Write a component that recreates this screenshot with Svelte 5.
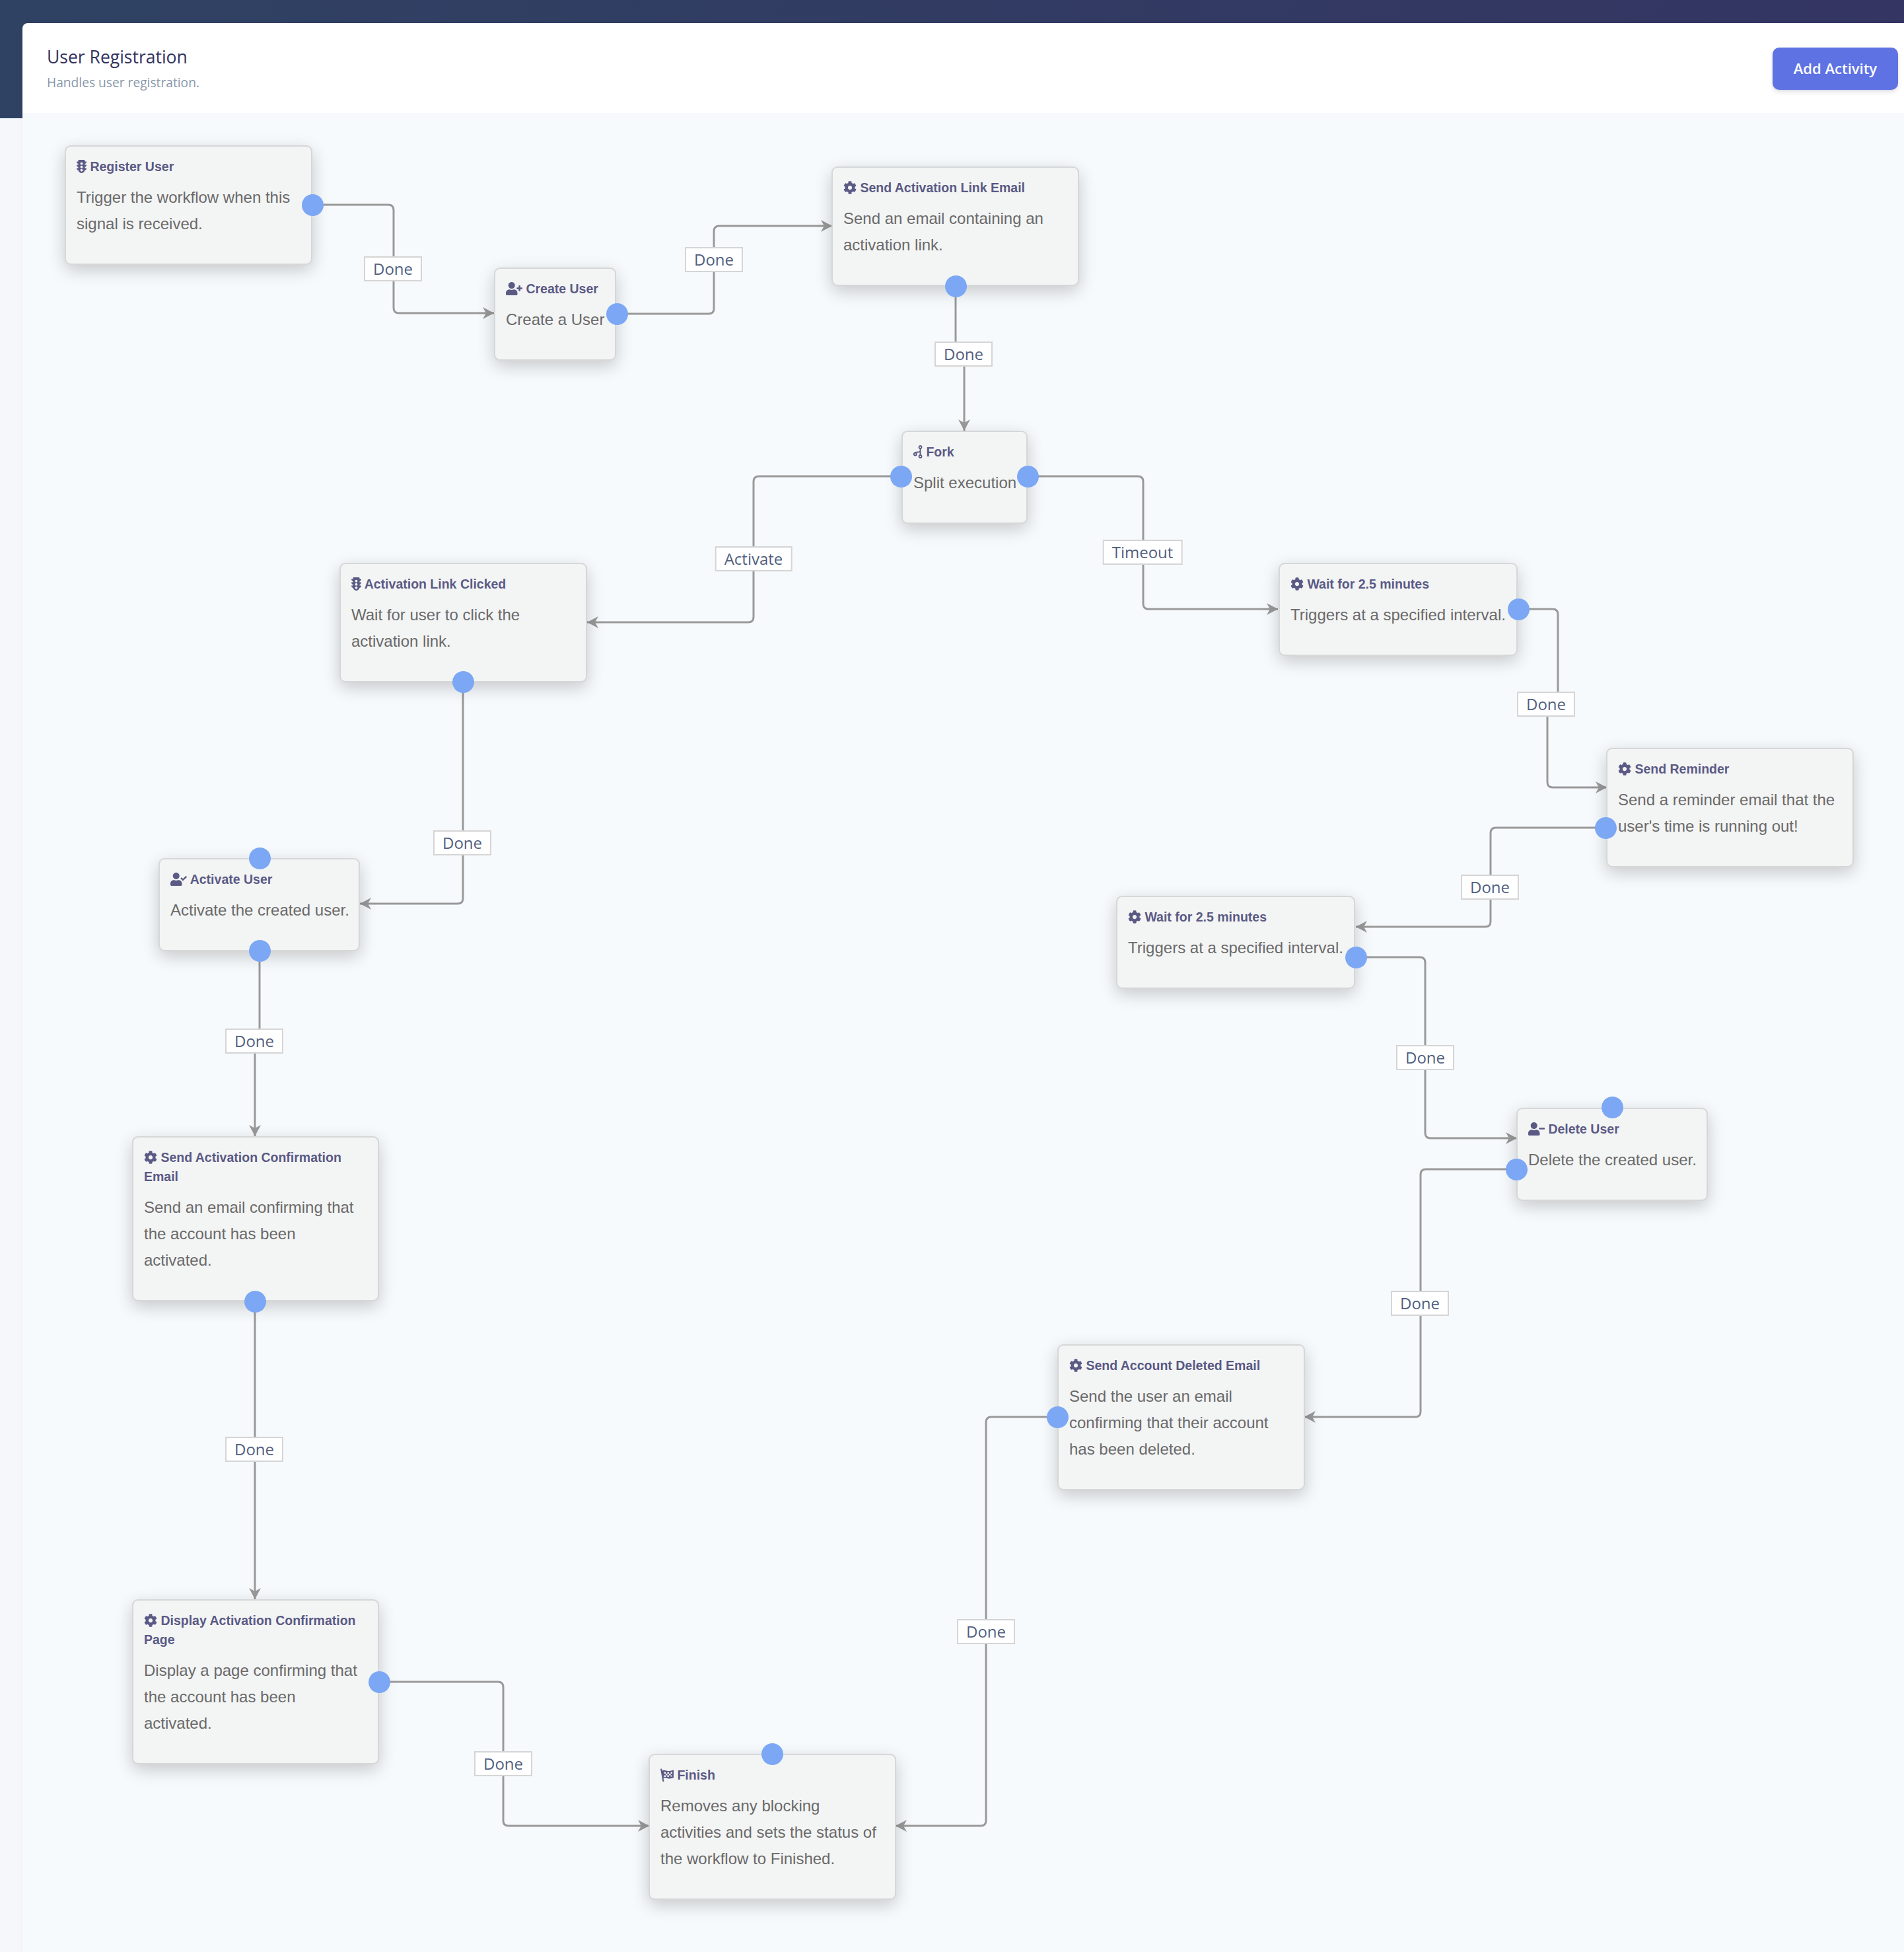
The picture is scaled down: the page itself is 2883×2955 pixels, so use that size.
<script>
  // page coordinates of the workflow, the canvas starts at ox/oy
  const ox = 34;
  const oy = 171;

  const user = "M224 256c70.7 0 128-57.3 128-128S294.7 0 224 0 96 57.3 96 128s57.3 128 128 128zm89.6 32h-16.7c-22.2 10.2-46.9 16-72.9 16s-50.6-5.8-72.9-16h-16.7C60.2 288 0 348.2 0 422.4V464c0 26.5 21.5 48 48 48h352c26.5 0 48-21.5 48-48v-41.6c0-74.2-60.2-134.4-134.4-134.4z";
  const icons = {
    signal: { box: "0 0 384 512", w: 15, d: "M384 192h-64v-37.88c37.2-13.22 64-48.38 64-90.12h-64V32c0-17.67-14.33-32-32-32H96C78.33 0 64 14.33 64 32v32H0c0 41.74 26.8 76.9 64 90.12V192H0c0 41.74 26.8 76.9 64 90.12V320H0c0 42.84 28.25 78.69 66.99 91.05C79.42 468.72 130.6 512 192 512s112.58-43.28 125.01-100.95C355.75 398.69 384 362.84 384 320h-64v-37.88c37.2-13.22 64-48.38 64-90.12zM192 448c-26.51 0-48-21.49-48-48s21.49-48 48-48 48 21.49 48 48-21.49 48-48 48zm0-128c-26.51 0-48-21.49-48-48s21.49-48 48-48 48 21.49 48 48-21.49 48-48 48zm0-128c-26.51 0-48-21.49-48-48 0-26.51 21.49-48 48-48s48 21.49 48 48c0 26.51-21.49 48-48 48z" },
    cog: { box: "0 0 512 512", w: 20, d: "M487.4 315.7l-42.6-24.6c4.3-23.2 4.3-47 0-70.2l42.6-24.6c4.9-2.8 7.1-8.6 5.5-14-11.1-35.6-30-67.8-54.7-94.6-3.8-4.1-10-5.1-14.8-2.3L380.8 110c-17.9-15.4-38.5-27.3-60.8-35.1V25.8c0-5.6-3.9-10.5-9.4-11.7-36.7-8.2-74.3-7.8-109.2 0-5.5 1.2-9.4 6.1-9.4 11.7V75c-22.2 7.9-42.8 19.8-60.8 35.1L88.7 85.5c-4.9-2.8-11-1.9-14.8 2.3-24.7 26.7-43.6 58.9-54.7 94.6-1.7 5.4.6 11.2 5.5 14L67.3 221c-4.3 23.2-4.3 47 0 70.2l-42.6 24.6c-4.9 2.8-7.1 8.6-5.5 14 11.1 35.6 30 67.8 54.7 94.6 3.8 4.1 10 5.1 14.8 2.3l42.6-24.6c17.9 15.4 38.5 27.3 60.8 35.1v49.2c0 5.6 3.9 10.5 9.4 11.7 36.7 8.2 74.3 7.8 109.2 0 5.5-1.2 9.4-6.1 9.4-11.7v-49.2c22.2-7.9 42.8-19.8 60.8-35.1l42.6 24.6c4.9 2.8 11 1.9 14.8-2.3 24.7-26.7 43.6-58.9 54.7-94.6 1.5-5.5-.7-11.3-5.6-14.1zM256 336c-44.1 0-80-35.9-80-80s35.9-80 80-80 80 35.9 80 80-35.9 80-80 80z" },
    userPlus: { box: "0 0 640 512", w: 25, d: user + "M624 208h-64v-64c0-8.8-7.2-16-16-16h-32c-8.8 0-16 7.2-16 16v64h-64c-8.8 0-16 7.2-16 16v32c0 8.8 7.2 16 16 16h64v64c0 8.8 7.2 16 16 16h32c8.8 0 16-7.2 16-16v-64h64c8.8 0 16-7.2 16-16v-32c0-8.8-7.2-16-16-16z" },
    userCheck: { box: "0 0 640 512", w: 25, d: user + "M636.6 159.6l-27.8-28.1c-4.6-4.7-12.1-4.7-16.8-.1l-104.8 104-45.5-45.8c-4.6-4.7-12.1-4.7-16.8-.1l-28.1 27.9c-4.7 4.6-4.7 12.1-.1 16.8l81.7 82.3c4.6 4.7 12.1 4.7 16.8.1l141.3-140.2c4.6-4.7 4.7-12.2.1-16.8z" },
    userMinus: { box: "0 0 640 512", w: 25, d: user + "M624 208H432c-8.8 0-16 7.2-16 16v32c0 8.8 7.2 16 16 16h192c8.8 0 16-7.2 16-16v-32c0-8.8-7.2-16-16-16z" },
  };

  const nodes = [
    { x: 98, y: 220, w: 375, icon: "signal", title: "Register User", text: "Trigger the workflow when this signal is received." },
    { x: 748, y: 405, w: 185, icon: "userPlus", title: "Create User", text: "Create a User", oneLine: true },
    { x: 1259, y: 252, w: 375, icon: "cog", title: "Send Activation Link Email", text: "Send an email containing an activation link." },
    { x: 1365, y: 652, w: 191, icon: "fork", title: "Fork", text: "Split execution", oneLine: true },
    { x: 514, y: 852, w: 375, icon: "signal", title: "Activation Link Clicked", text: "Wait for user to click the activation link." },
    { x: 240, y: 1299, w: 305, icon: "userCheck", title: "Activate User", text: "Activate the created user.", oneLine: true },
    { x: 200, y: 1720, w: 374, icon: "cog", title: "Send Activation Confirmation Email", text: "Send an email confirming that the account has been activated." },
    { x: 200, y: 2421, w: 374, icon: "cog", title: "Display Activation Confirmation Page", text: "Display a page confirming that the account has been activated." },
    { x: 982, y: 2655, w: 375, icon: "flag", title: "Finish", text: "Removes any blocking activities and sets the status of the workflow to Finished." },
    { x: 1601, y: 2035, w: 375, icon: "cog", title: "Send Account Deleted Email", text: "Send the user an email confirming that their account has been deleted." },
    { x: 2296, y: 1677, w: 290, icon: "userMinus", title: "Delete User", text: "Delete the created user.", oneLine: true },
    { x: 1690, y: 1356, w: 362, icon: "cog", title: "Wait for 2.5 minutes", text: "Triggers at a specified interval.", oneLine: true },
    { x: 2432, y: 1132, w: 375, icon: "cog", title: "Send Reminder", text: "Send a reminder email that the user's time is running out!" },
    { x: 1936, y: 852, w: 362, icon: "cog", title: "Wait for 2.5 minutes", text: "Triggers at a specified interval.", oneLine: true },
  ];

  const ports = [
    [473, 310], [934, 475], [1447, 433], [1364, 721], [1556, 721], [2299, 922], [2431, 1253],
    [2053, 1449], [2296, 1770], [1601, 2145], [701, 1032], [393, 1439], [393, 1299], [386, 1970],
    [574, 2546], [2441, 1676], [1169, 2655],
  ];

  const edges = [
    { label: "Done", at: [595, 407], pts: [[473, 310], [596, 310], [596, 474], [748, 474]] },
    { label: "Done", at: [1081, 393], pts: [[933, 475], [1081, 475], [1081, 342], [1260, 342]] },
    { label: "Done", at: [1459, 536], pts: [[1447, 433], [1447, 536], [1460, 536], [1460, 652]], sharp: true },
    { label: "Activate", at: [1141, 846], pts: [[1364, 721], [1141, 721], [1141, 942], [889, 942]] },
    { label: "Timeout", at: [1730, 836], pts: [[1556, 721], [1731, 721], [1731, 922], [1935, 922]] },
    { label: "Done", at: [2341, 1066], pts: [[2299, 922], [2359, 922], [2359, 1066], [2343, 1066], [2343, 1192], [2433, 1192]] },
    { label: "Done", at: [2256, 1343], pts: [[2431, 1253], [2257, 1253], [2257, 1403], [2053, 1403]] },
    { label: "Done", at: [2158, 1601], pts: [[2054, 1449], [2158, 1449], [2158, 1723], [2297, 1723]] },
    { label: "Done", at: [2150, 1973], pts: [[2296, 1770], [2151, 1770], [2151, 2145], [1975, 2145]] },
    { label: "Done", at: [1493, 2470], pts: [[1601, 2145], [1493, 2145], [1493, 2764], [1356, 2764]] },
    { label: "Done", at: [700, 1276], pts: [[701, 1032], [701, 1368], [545, 1368]] },
    { label: "Done", at: [385, 1576], pts: [[393, 1439], [393, 1576], [386, 1576], [386, 1720]], sharp: true },
    { label: "Done", at: [385, 2194], pts: [[386, 1969], [386, 2421]] },
    { label: "Done", at: [762, 2670], pts: [[574, 2546], [762, 2546], [762, 2764], [983, 2764]] },
  ];

  function pathOf(pts, sharp) {
    const r = sharp ? 0 : 8;
    let d = `M${pts[0][0]} ${pts[0][1]}`;
    for (let i = 1; i < pts.length - 1; i++) {
      const [px, py] = pts[i - 1];
      const [x, y] = pts[i];
      const [nx, ny] = pts[i + 1];
      d += `L${x - Math.sign(x - px) * r} ${y - Math.sign(y - py) * r}`;
      d += `Q${x} ${y} ${x + Math.sign(nx - x) * r} ${y + Math.sign(ny - y) * r}`;
    }
    const last = pts[pts.length - 1];
    return d + `L${last[0]} ${last[1]}`;
  }

  function arrowOf(pts) {
    const [px, py] = pts[pts.length - 2];
    const [x, y] = pts[pts.length - 1];
    const deg = (Math.atan2(y - py, x - px) * 180) / Math.PI;
    return `translate(${x} ${y}) rotate(${deg})`;
  }
</script>

<div class="backdrop"></div>

<main class="main">
  <header class="head">
    <div>
      <h1>User Registration</h1>
      <p>Handles user registration.</p>
    </div>
    <button class="add">Add Activity</button>
  </header>

  <section class="canvas">
    <svg class="wires" width="2849" height="2784" viewBox="{ox} {oy} 2849 2784">
      {#each edges as edge}
        <path class="wire" d={pathOf(edge.pts, edge.sharp)} />
        <path class="head-mark" transform={arrowOf(edge.pts)} d="M0 0L-17-9L-12 0L-17 9Z" />
      {/each}
    </svg>

    {#each nodes as node}
      <article class="node" style="left:{node.x - ox}px;top:{node.y - oy}px;width:{node.w}px">
        <h2>
          {#if node.icon === "fork"}
            <svg class="ico" width="14" height="20" viewBox="0 0 14 20">
              <circle cx="10.5" cy="3" r="2" class="ring" />
              <circle cx="2.8" cy="13.5" r="2" class="ring" />
              <circle cx="10.5" cy="17" r="2" class="ring" />
              <path class="ring" d="M10.5 5V15M10.5 8Q10.5 10.5 6 10.5Q2.8 10.5 2.8 11.5" />
            </svg>
          {:else if node.icon === "flag"}
            <svg class="ico" width="20" height="20" viewBox="0 0 20 20">
              <path d="M0 0.8l2-.4 3.500 19.500-2 .1zM2.500 3.500c4-2 6.500 1 10.500 0.500 2-.2 4.500-1 7-1.500v11.500c-3 1.500-6.500 2-9.500 1-2.500-.8-4.500-1-5.800 0z" />
              <path class="check" d="M5.500 5.500h2.500v2.500H5.500zM10.500 5.500h2.500v2.500h-2.500zM15.500 5.500h2.500v2.500h-2.500zM8 8h2.500v2.500H8zM13 8h2.500v2.500H13zM5.500 10.500h2.500v2.500H5.500zM10.500 10.500h2.500v2.500h-2.500zM15.500 10.500h2v2h-2z" />
            </svg>
          {:else}
            <svg class="ico" width={icons[node.icon].w} height="20" viewBox={icons[node.icon].box}>
              <path d={icons[node.icon].d} />
            </svg>
          {/if}
          {node.title}
        </h2>
        <p class:one={node.oneLine}>{node.text}</p>
      </article>
    {/each}

    {#each ports as port}
      <span class="port" style="left:{port[0] - ox}px;top:{port[1] - oy}px"></span>
    {/each}

    {#each edges as edge}
      <span class="tag" style="left:{edge.at[0] - ox}px;top:{edge.at[1] - oy}px">{edge.label}</span>
    {/each}
  </section>
</main>

<style>
  :global(body) {
    margin: 0;
    background: #f5f7fb;
    width: 2883px;
    height: 2955px;
    overflow: hidden;
  }

  .backdrop {
    position: absolute;
    left: 0;
    top: 0;
    width: 2883px;
    height: 179px;
    background: linear-gradient(90deg, #2f4263, #343562);
  }

  .main {
    position: absolute;
    left: 34px;
    top: 35px;
    width: 2849px;
    display: flex;
    flex-direction: column;
    border-top-left-radius: 8px;
    overflow: hidden;
    box-shadow: 0 0 6px rgba(0, 0, 0, 0.05);
  }

  .head {
    height: 136px;
    box-sizing: border-box;
    display: flex;
    justify-content: space-between;
    align-items: flex-start;
    background: #fff;
    padding: 32px 9px 0 37px;
    font-family: "Open Sans", "Noto Sans", sans-serif;
  }

  h1 {
    margin: 0;
    font-size: 26.5px;
    line-height: 38px;
    font-weight: 400;
    color: #32325d;
  }

  .head p {
    margin: 4px 0 0;
    font-size: 19.2px;
    line-height: 32px;
    color: #8898aa;
  }

  .add {
    width: 190px;
    height: 64px;
    margin-top: 5px;
    padding: 0 0 2px;
    border: 0;
    border-radius: 10px;
    background: #5e72e4;
    color: #fff;
    font: 600 22px "Open Sans", "Noto Sans", sans-serif;
    box-shadow: 0 4px 6px rgba(50, 50, 93, 0.11), 0 1px 3px rgba(0, 0, 0, 0.08);
  }

  .canvas {
    position: relative;
    height: 2784px;
    background: #f7fafc;
  }

  .wires {
    position: absolute;
    left: 0;
    top: 0;
  }

  .wire {
    fill: none;
    stroke: #999;
    stroke-width: 3;
  }

  .head-mark {
    fill: #999;
  }

  .node {
    position: absolute;
    box-sizing: border-box;
    padding: 16px 16px 40px;
    border: 2px solid #d5d7d8;
    border-radius: 9px;
    background: #f3f4f4;
    box-shadow: 0 8px 26px rgba(0, 0, 0, 0.2);
    font-family: "Liberation Sans", Arial, sans-serif;
  }

  h2 {
    margin: 0 0 12px;
    font-size: 19.5px;
    line-height: 29px;
    font-weight: 700;
    color: #5a5a85;
  }

  .ico {
    vertical-align: -3px;
    fill: currentColor;
  }

  .ring {
    fill: none;
    stroke: currentColor;
    stroke-width: 1.8;
  }

  .check {
    fill: #f3f4f4;
  }

  .node p {
    margin: 0;
    font-size: 24px;
    line-height: 40px;
    color: #6a6a6a;
  }

  .node p.one {
    white-space: nowrap;
  }

  .port {
    position: absolute;
    width: 33px;
    height: 33px;
    margin: -16.5px 0 0 -16.5px;
    border-radius: 50%;
    background: #7ba7f5;
  }

  .tag {
    position: absolute;
    transform: translate(-50%, -50%);
    box-sizing: border-box;
    height: 38px;
    padding: 0 12px;
    border: 2px solid #d5d5d5;
    background: #fff;
    font: 24px/34px "Open Sans", "Noto Sans", sans-serif;
    color: #525f7f;
    white-space: nowrap;
  }
</style>
